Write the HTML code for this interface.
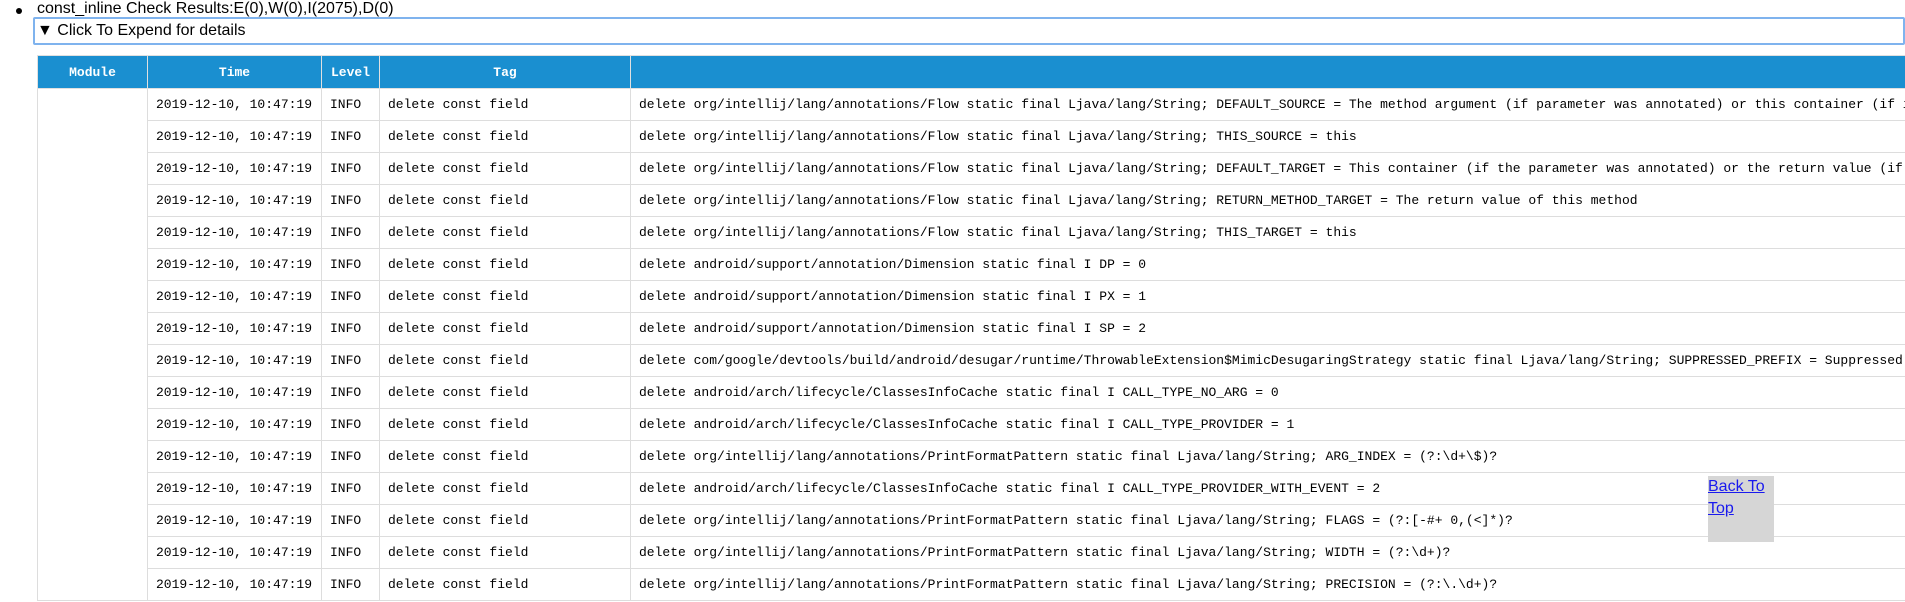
<!DOCTYPE html>
<html><head><meta charset="utf-8"><style>
html,body{margin:0;padding:0;width:1905px;height:602px;overflow:hidden;background:#fff}
body{position:relative;font-family:"Liberation Sans",Arial,sans-serif}
.wrap{position:absolute;left:0;top:0;width:1905px;height:602px;overflow:hidden}
.title{position:absolute;left:37px;top:0px;font-size:16px;color:#000;white-space:nowrap;z-index:2}
.bullet{position:absolute;left:16px;top:8px;width:6px;height:6px;border-radius:50%;background:#000}
.sum{position:absolute;left:33px;top:17px;width:1866px;height:24px;border:2px solid #7fb3ee;border-radius:2px;font-size:16px;line-height:23px;padding-left:2px;box-sizing:content-box;white-space:nowrap}
table{position:absolute;left:37px;top:55px;border-collapse:collapse;table-layout:fixed;width:2400px;font-family:"Liberation Mono","Courier New",monospace;font-size:13px}
th{background:#1a8fd0;color:#fff;height:32px;padding:0;border:1px solid #e0e0e0;font-weight:bold;text-align:center}
td{height:31px;padding:0 0 0 8px;border:1px solid #ddd;white-space:nowrap;overflow:hidden;color:#000}
.btt{position:absolute;left:1708px;top:476px;width:66px;height:66px;background:#d6d6d6;font-size:16px;line-height:22px}
.btt a{color:#1a1aee;text-decoration:underline}
</style></head><body><div class="wrap">
<div class="bullet"></div>
<div class="sum">▼ Click To Expend for details</div>
<div class="title">const_inline Check Results:E(0),W(0),I(2075),D(0)</div>
<table>
<colgroup><col style="width:110px"><col style="width:174px"><col style="width:58px"><col style="width:251px"><col style="width:1807px"></colgroup>
<tr><th>Module</th><th>Time</th><th>Level</th><th>Tag</th><th></th></tr>
<tr><td rowspan="16"></td><td>2019-12-10, 10:47:19</td><td>INFO</td><td>delete const field</td><td>delete org/intellij/lang/annotations/Flow static final Ljava/lang/String; DEFAULT_SOURCE = The method argument (if parameter was annotated) or this container (if instance method was annotated)</td></tr>
<tr><td>2019-12-10, 10:47:19</td><td>INFO</td><td>delete const field</td><td>delete org/intellij/lang/annotations/Flow static final Ljava/lang/String; THIS_SOURCE = this</td></tr>
<tr><td>2019-12-10, 10:47:19</td><td>INFO</td><td>delete const field</td><td>delete org/intellij/lang/annotations/Flow static final Ljava/lang/String; DEFAULT_TARGET = This container (if the parameter was annotated) or the return value (if instance method was annotated)</td></tr>
<tr><td>2019-12-10, 10:47:19</td><td>INFO</td><td>delete const field</td><td>delete org/intellij/lang/annotations/Flow static final Ljava/lang/String; RETURN_METHOD_TARGET = The return value of this method</td></tr>
<tr><td>2019-12-10, 10:47:19</td><td>INFO</td><td>delete const field</td><td>delete org/intellij/lang/annotations/Flow static final Ljava/lang/String; THIS_TARGET = this</td></tr>
<tr><td>2019-12-10, 10:47:19</td><td>INFO</td><td>delete const field</td><td>delete android/support/annotation/Dimension static final I DP = 0</td></tr>
<tr><td>2019-12-10, 10:47:19</td><td>INFO</td><td>delete const field</td><td>delete android/support/annotation/Dimension static final I PX = 1</td></tr>
<tr><td>2019-12-10, 10:47:19</td><td>INFO</td><td>delete const field</td><td>delete android/support/annotation/Dimension static final I SP = 2</td></tr>
<tr><td>2019-12-10, 10:47:19</td><td>INFO</td><td>delete const field</td><td>delete com/google/devtools/build/android/desugar/runtime/ThrowableExtension$MimicDesugaringStrategy static final Ljava/lang/String; SUPPRESSED_PREFIX = Suppressed:</td></tr>
<tr><td>2019-12-10, 10:47:19</td><td>INFO</td><td>delete const field</td><td>delete android/arch/lifecycle/ClassesInfoCache static final I CALL_TYPE_NO_ARG = 0</td></tr>
<tr><td>2019-12-10, 10:47:19</td><td>INFO</td><td>delete const field</td><td>delete android/arch/lifecycle/ClassesInfoCache static final I CALL_TYPE_PROVIDER = 1</td></tr>
<tr><td>2019-12-10, 10:47:19</td><td>INFO</td><td>delete const field</td><td>delete org/intellij/lang/annotations/PrintFormatPattern static final Ljava/lang/String; ARG_INDEX = (?:\d+\$)?</td></tr>
<tr><td>2019-12-10, 10:47:19</td><td>INFO</td><td>delete const field</td><td>delete android/arch/lifecycle/ClassesInfoCache static final I CALL_TYPE_PROVIDER_WITH_EVENT = 2</td></tr>
<tr><td>2019-12-10, 10:47:19</td><td>INFO</td><td>delete const field</td><td>delete org/intellij/lang/annotations/PrintFormatPattern static final Ljava/lang/String; FLAGS = (?:[-#+ 0,(&lt;]*)?</td></tr>
<tr><td>2019-12-10, 10:47:19</td><td>INFO</td><td>delete const field</td><td>delete org/intellij/lang/annotations/PrintFormatPattern static final Ljava/lang/String; WIDTH = (?:\d+)?</td></tr>
<tr><td>2019-12-10, 10:47:19</td><td>INFO</td><td>delete const field</td><td>delete org/intellij/lang/annotations/PrintFormatPattern static final Ljava/lang/String; PRECISION = (?:\.\d+)?</td></tr>
</table>
<div class="btt"><a>Back To Top</a></div>
</div></body></html>
